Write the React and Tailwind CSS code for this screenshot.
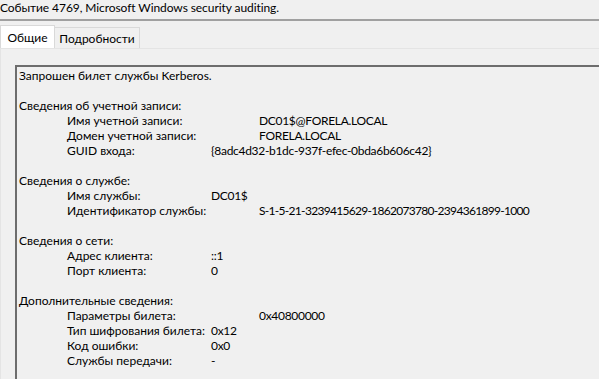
import React from "react";

const sections = [
  {
    title: "Сведения об учетной записи:",
    rows: [
      ["Имя учетной записи:", "DC01$@FORELA.LOCAL", "min-w-[192px]"],
      ["Домен учетной записи:", "FORELA.LOCAL", "min-w-[192px]"],
      ["GUID входа:", "{8adc4d32-b1dc-937f-efec-0bda6b606c42}", "min-w-[144px]"],
    ],
  },
  {
    title: "Сведения о службе:",
    rows: [
      ["Имя службы:", "DC01$", "min-w-[144px]"],
      ["Идентификатор службы:", "S-1-5-21-3239415629-1862073780-2394361899-1000", "min-w-[192px]", true],
    ],
  },
  {
    title: "Сведения о сети:",
    rows: [
      ["Адрес клиента:", "::1", "min-w-[144px]"],
      ["Порт клиента:", "0", "min-w-[144px]"],
    ],
  },
  {
    title: "Дополнительные сведения:",
    rows: [
      ["Параметры билета:", "0x40800000", "min-w-[192px]"],
      ["Тип шифрования билета:", "0x12", "min-w-[144px]"],
      ["Код ошибки:", "0x0", "min-w-[144px]"],
      ["Службы передачи:", "-", "min-w-[144px]"],
    ],
  },
];

export default function App() {
  return (
    <div
      className="w-[599px] h-[379px] overflow-hidden bg-[#f0f0f0] text-black text-[12px] leading-[15px]"
      style={{ fontFamily: 'Lato, "Noto Sans", sans-serif' }}
    >
      {/* Header */}
      <div className="h-[19px] whitespace-nowrap tracking-[-0.08px]">
        Событие 4769, Microsoft Windows security auditing.
      </div>
      <div className="h-[2px] bg-[#a0a0a0]" />

      {/* Tabs */}
      <div className="flex items-end h-[27px]">
        <div className="h-[23px] w-[55px] bg-white border border-b-0 border-[#d9d9d9] flex items-center justify-center">
          Общие
        </div>
        <div className="h-[21px] w-[85px] bg-[#f0f0f0] border border-l-0 border-b-0 border-[#d9d9d9] flex items-center justify-center">
          Подробности
        </div>
      </div>

      {/* Tab panel */}
      <div className="border-l border-t border-[#e4e4e4] pl-[14px] pt-[16px] h-[400px]">
        <div className="border-l-2 border-t-2 border-l-[#6d6d6d] border-t-[#6d6d6d] pl-[2px] pt-[1px] h-[400px] whitespace-nowrap">
          <div>Запрошен билет службы Kerberos.</div>
          {sections.map((s) => (
            <div key={s.title}>
              <div className="h-[15px]" />
              <div>{s.title}</div>
              {s.rows.map(([label, value, w, tight]) => (
                <div key={label} className="flex pl-[48px]">
                  <span className={w + " shrink-0 pr-[3px]"}>{label}</span>
                  <span className={tight ? "tracking-[-0.7px]" : "tracking-[-0.3px]"}>{value}</span>
                </div>
              ))}
            </div>
          ))}
        </div>
      </div>
    </div>
  );
}
